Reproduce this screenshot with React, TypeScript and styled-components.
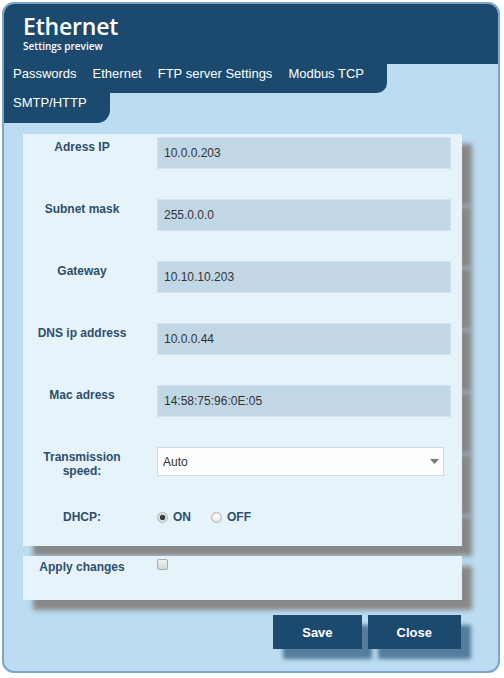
import React, { useState } from 'react';
import styled, { createGlobalStyle } from 'styled-components';

const GlobalStyle = createGlobalStyle`
  body {
    margin: 0;
    background: #ffffff;
    font-family: "Liberation Sans", Arial, sans-serif;
  }
`;

const Frame = styled.div`
  margin: 2px;
  width: 498px;
  height: 671px;
  box-sizing: border-box;
  border: 2px solid #7ba6c6;
  border-radius: 12px;
  background: #bcdcf1;
  overflow: hidden;
`;

const Header = styled.div`
  height: 60px;
  box-sizing: border-box;
  padding: 9px 19px 0;
  background: #1b4a6e;
  color: #ffffff;
  font-family: "Open Sans", sans-serif;
  font-weight: 600;
`;

const Title = styled.h1`
  margin: 0;
  font-size: 23px;
  line-height: 26px;
  font-weight: 600;
  letter-spacing: -0.2px;
`;

const Subtitle = styled.div`
  margin-top: 1px;
  font-size: 10px;
  line-height: 12px;
`;

const TabRow = styled.ul<{ $radius: number; $h: number }>`
  display: flex;
  width: fit-content;
  height: ${(p) => p.$h}px;
  box-sizing: border-box;
  margin: 0;
  padding: 2px 15px 0 1px;
  list-style: none;
  background: #1b4a6e;
  border-bottom-right-radius: ${(p) => p.$radius}px;
`;

const Tab = styled.li`
  padding: 0 8px;
  color: #ffffff;
  font-size: 13px;
  line-height: 16px;
  cursor: pointer;
`;

const Body = styled.div`
  width: 439px;
  padding: 11px 0 0 19px;
`;

const Row = styled.div<{ $h: number; $top?: number }>`
  display: grid;
  grid-template-columns: 118px 1fr;
  column-gap: 16px;
  height: ${(p) => p.$h}px;
  box-sizing: border-box;
  padding: ${(p) => p.$top ?? 3}px 11px 0 0;
  background: #e6f3fb;
  box-shadow: 10px 10px 5px #888888;
`;

const Label = styled.label<{ $top?: number }>`
  padding: ${(p) => p.$top ?? 3}px 6px 0;
  text-align: center;
  color: #2d4e6c;
  font-size: 12px;
  line-height: 14px;
  font-weight: bold;
`;

const TextInput = styled.input`
  width: 294px;
  height: 32px;
  box-sizing: border-box;
  padding: 0 6px;
  border: 1px solid #d3e3ef;
  background: #c2d7e6;
  color: #333333;
  font-family: "Liberation Sans", Arial, sans-serif;
  font-size: 12px;
  outline: none;
`;

const SelectWrap = styled.div`
  position: relative;
  width: 287px;
  height: 29px;
`;

const Select = styled.select`
  width: 100%;
  height: 100%;
  box-sizing: border-box;
  padding: 0 5px;
  appearance: none;
  border: 1px solid #c6dcec;
  border-radius: 0;
  background: #fdfdfd;
  color: #333333;
  font-family: "Liberation Sans", Arial, sans-serif;
  font-size: 12px;
  outline: none;
`;

const Arrow = styled.svg`
  position: absolute;
  right: 5px;
  top: 12px;
  pointer-events: none;
`;

const Options = styled.div`
  display: flex;
  align-items: center;
  padding-top: 4px;
  height: 14px;
`;

const Choice = styled.label`
  display: flex;
  align-items: center;
  gap: 5px;
  margin-right: 20px;
  color: #2d4e6c;
  font-size: 12px;
  line-height: 14px;
  font-weight: bold;
`;

const Radio = styled.input`
  appearance: none;
  margin: 0;
  width: 11px;
  height: 11px;
  border-radius: 50%;
  border: 1px solid #b4b4b4;
  background: radial-gradient(circle at 50% 40%, #ffffff 0, #d8d8d8 100%);
  &:checked {
    background: radial-gradient(circle, #3c3c3c 0 2.4px, #d8d8d8 3px, #f2f2f2 100%);
  }
`;

const Check = styled.input`
  appearance: none;
  margin: 2px 0 0;
  width: 11px;
  height: 11px;
  border-radius: 2px;
  border: 1px solid #a9a9a9;
  background: linear-gradient(#f0f0f0, #d6d6d6);
`;

const ApplyPanel = styled.div`
  margin-top: 10px;
`;

const Buttons = styled.div`
  display: flex;
  justify-content: flex-end;
  gap: 6px;
  margin-top: 15px;
  padding-right: 1px;
`;

const Button = styled.button`
  height: 34px;
  padding: 0 29px;
  border: none;
  background: #1b4a6e;
  color: #ffffff;
  font-family: "Liberation Sans", Arial, sans-serif;
  font-size: 13px;
  font-weight: bold;
  box-shadow: 10px 10px 4px rgba(27, 74, 110, 0.65);
  cursor: pointer;
`;

const fields = [
  { label: 'Adress IP', value: '10.0.0.203' },
  { label: 'Subnet mask', value: '255.0.0.0' },
  { label: 'Gateway', value: '10.10.10.203' },
  { label: 'DNS ip address', value: '10.0.0.44' },
  { label: 'Mac adress', value: '14:58:75:96:0E:05' },
];

const App: React.FC = () => {
  const [dhcp, setDhcp] = useState('on');

  return (
    <>
      <GlobalStyle />
      <Frame>
        <Header>
          <Title>Ethernet</Title>
          <Subtitle>Settings preview</Subtitle>
        </Header>
        <TabRow $radius={10} $h={29}>
          <Tab>Passwords</Tab>
          <Tab>Ethernet</Tab>
          <Tab>FTP server Settings</Tab>
          <Tab>Modbus TCP</Tab>
        </TabRow>
        <TabRow $radius={13} $h={30}>
          <Tab>SMTP/HTTP</Tab>
        </TabRow>
        <Body>
          {fields.map((f) => (
            <Row key={f.label} $h={62}>
              <Label>{f.label}</Label>
              <div>
                <TextInput defaultValue={f.value} />
              </div>
            </Row>
          ))}
          <Row $h={62}>
            <Label>Transmission speed:</Label>
            <SelectWrap>
              <Select defaultValue="auto">
                <option value="auto">Auto</option>
                <option value="10">10 Mbit/s</option>
                <option value="100">100 Mbit/s</option>
              </Select>
              <Arrow width="9" height="5" viewBox="0 0 9 5">
                <path d="M0 0 H9 L4.5 5 Z" fill="#7a7a7a" />
              </Arrow>
            </SelectWrap>
          </Row>
          <Row $h={40} $top={0}>
            <Label $top={4}>DHCP:</Label>
            <Options>
              <Choice>
                <Radio type="radio" name="dhcp" checked={dhcp === 'on'} onChange={() => setDhcp('on')} />
                ON
              </Choice>
              <Choice>
                <Radio type="radio" name="dhcp" checked={dhcp === 'off'} onChange={() => setDhcp('off')} />
                OFF
              </Choice>
            </Options>
          </Row>
          <ApplyPanel>
            <Row $h={44} $top={0}>
              <Label $top={4}>Apply changes</Label>
              <div>
                <Check type="checkbox" />
              </div>
            </Row>
          </ApplyPanel>
          <Buttons>
            <Button>Save</Button>
            <Button>Close</Button>
          </Buttons>
        </Body>
      </Frame>
    </>
  );
};

export default App;
